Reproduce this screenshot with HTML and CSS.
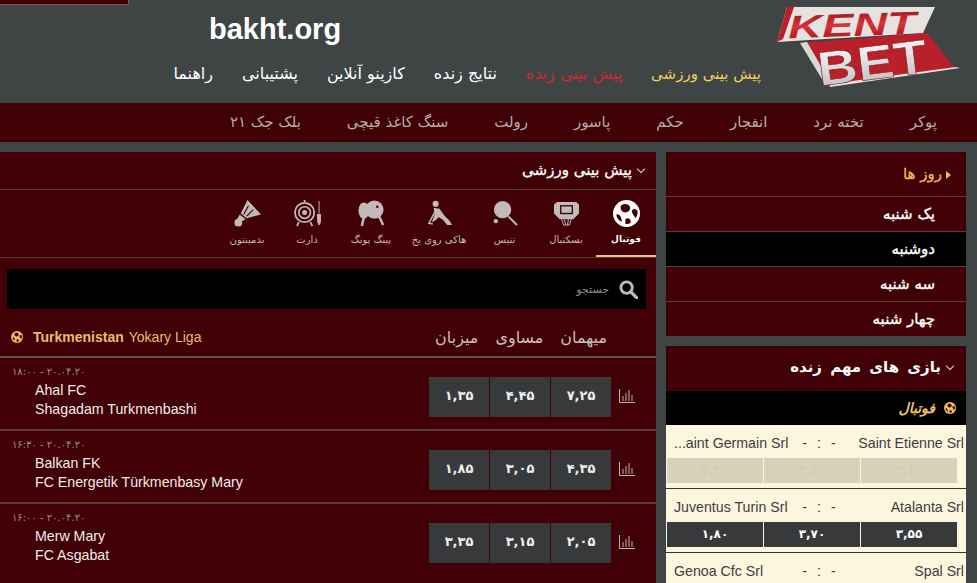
FILE: index.html
```html
<!DOCTYPE html>
<html lang="fa">
  <head>
    <meta charset="UTF-8" />
    <title>bakht.org</title>
    <link rel="stylesheet" href="styles.css">
  </head>
  <body>
    <div class="corner-box"></div>
    <header class="top">
      <div class="logo-wrap">
        <svg class="logo" viewBox="0 0 207 100" width="207" height="100">
          <defs>
            <linearGradient id="kent-red" x1="0" y1="0" x2="0" y2="1">
              <stop offset="0" stop-color="#8e0f18"/>
              <stop offset="0.5" stop-color="#d9323a"/>
              <stop offset="1" stop-color="#9c1019"/>
            </linearGradient>
            <linearGradient id="bet-white" x1="0" y1="0" x2="0" y2="1">
              <stop offset="0" stop-color="#ffffff"/>
              <stop offset="1" stop-color="#b9b9b9"/>
            </linearGradient>
          </defs>
          <polygon points="17,7 165,7 153,33 7,42" fill="#e6e2e0"/>
          <polygon points="17,7 24,7 13,39 7,42" fill="#b8202a"/>
          <text x="18" y="36" class="logo-kent" transform="rotate(-2 80 24)" textLength="128" lengthAdjust="spacingAndGlyphs">KENT</text>
          <polygon points="30,43 157,33 185,68 58,87" fill="#b8202a"/>
          <polygon points="30,43 37,42 62,85 55,84" fill="#d8d8d8"/>
          <polygon points="60,84 186,67 190,68 60,87" fill="#e6e2e0"/>
          <text x="47" y="79" class="logo-bet" transform="rotate(-7 105 60)" textLength="110" lengthAdjust="spacingAndGlyphs">BET</text>
        </svg>
      </div>
      <div class="top-main">
        <div class="site-name">bakht.org</div>
        <nav class="main-nav">
          <a class="yellow" href="#">پیش بینی ورزشی</a>
          <a class="red" href="#">پیش بینی زنده</a>
          <a href="#">نتایج زنده</a>
          <a href="#">کازینو آنلاین</a>
          <a href="#">پشتیبانی</a>
          <a href="#">راهنما</a>
        </nav>
      </div>
    </header>

    <nav class="games-nav">
      <a href="#">پوکر</a>
      <a href="#">تخته نرد</a>
      <a href="#">انفجار</a>
      <a href="#">حکم</a>
      <a href="#">پاسور</a>
      <a href="#">رولت</a>
      <a href="#">سنگ کاغذ قیچی</a>
      <a href="#">بلک جک ۲۱</a>
    </nav>

    <div class="content">
      <aside class="side">
        <section class="days">
          <h3 class="days-title"><span class="arrow-right"></span>روز ها</h3>
          <a class="day" href="#">یک شنبه</a>
          <a class="day active" href="#">دوشنبه</a>
          <a class="day" href="#">سه شنبه</a>
          <a class="day" href="#">چهار شنبه</a>
        </section>

        <section class="live">
          <h3 class="live-title"><span class="chev"></span>بازی های مهم زنده</h3>
          <div class="live-sport">
            <svg class="ball small" viewBox="0 0 24 24"><use href="#ball-icon"/></svg>
            <span>فوتبال</span>
          </div>
          <div class="live-list">
            <div class="live-match">
              <div class="live-teams">
                <span class="team-r">Saint Etienne Srl</span>
                <span class="score">- : -</span>
                <span class="team-l">...aint Germain Srl</span>
              </div>
              <div class="live-odds off"><span>۲,۱۰</span><span>۳,۲۰</span><span>۳,۳۰</span></div>
            </div>
            <div class="live-match">
              <div class="live-teams">
                <span class="team-r">Atalanta Srl</span>
                <span class="score">- : -</span>
                <span class="team-l">Juventus Turin Srl</span>
              </div>
              <div class="live-odds"><span>۳,۵۵</span><span>۳,۷۰</span><span>۱,۸۰</span></div>
            </div>
            <div class="live-match">
              <div class="live-teams">
                <span class="team-r">Spal Srl</span>
                <span class="score">- : -</span>
                <span class="team-l">Genoa Cfc Srl</span>
              </div>
            </div>
          </div>
        </section>
      </aside>

      <main class="panel">
        <h2 class="panel-title"><span class="chev"></span>پیش بینی ورزشی</h2>

        <div class="sports">
          <a class="sport active" href="#">
            <svg viewBox="0 0 24 24"><symbol id="ball-icon" viewBox="0 0 24 24"><circle cx="12" cy="12" r="12" fill="currentColor"/><path d="M7 5c2-2 7-2 8 1 1 2-1 5-4 5S6 8 7 5zM3 13c1-1 3 0 4 2l1 4c-2 0-5-3-5-6zM17 9c2-2 4-1 5 1 0 3-1 5-2 6-1-2-4-5-3-7zM11 17c1-1 3-1 4 0l1 3c-1 1-4 2-5 1z" fill="#400005"/></symbol><use href="#ball-icon"/></svg>
            <span>فوتبال</span>
          </a>
          <a class="sport" href="#">
            <svg viewBox="0 0 28 28"><path d="M4 2h20l3 3v9l-6 6H7l-6-6V5z" fill="currentColor"/><rect x="8" y="6" width="12" height="8" fill="none" stroke="#400005" stroke-width="1.400"/><path d="M9 20l2 6h6l2-6M12 20l1 6M16 20l-1 6" fill="none" stroke="currentColor"/></svg>
            <span>بسکتبال</span>
          </a>
          <a class="sport mid" href="#">
            <svg viewBox="0 0 28 28"><circle cx="12" cy="10" r="9" fill="currentColor"/><path d="M18 17l9 9" stroke="currentColor" stroke-width="2"/><circle cx="5" cy="22" r="2.200" fill="currentColor"/></svg>
            <span>تنیس</span>
          </a>
          <a class="sport wide" href="#">
            <svg viewBox="0 0 28 28"><circle cx="10" cy="4" r="3.200" fill="currentColor"/><path d="M8 8l6 1 5 7 5 5 3 5h-5l-5-6-4-2-3 3-4 2 3-8z" fill="currentColor"/><path d="M10 11L3 24l4 1" fill="none" stroke="currentColor" stroke-width="1.600"/></svg>
            <span>هاکی روی یخ</span>
          </a>
          <a class="sport wide" href="#">
            <svg viewBox="0 0 28 28"><circle cx="17" cy="10" r="9.500" fill="currentColor"/><ellipse cx="6" cy="11" rx="5.500" ry="8.500" fill="currentColor"/><path d="M6 18l-2 9M22 17l4 9" stroke="currentColor" stroke-width="2.600"/><circle cx="20" cy="7" r="1.300" fill="#400005"/></svg>
            <span>پینگ پونگ</span>
          </a>
          <a class="sport" href="#">
            <svg viewBox="0 0 28 28"><circle cx="11" cy="13" r="10" fill="none" stroke="currentColor" stroke-width="1.800"/><circle cx="11" cy="13" r="6" fill="none" stroke="currentColor" stroke-width="1.800"/><circle cx="11" cy="13" r="2.600" fill="currentColor"/><path d="M11 0v2M5 23l-2 4M17 23l2 4" stroke="currentColor" stroke-width="1.800"/><path d="M26 1v13M24.200 15h3.600l-.5 8-1.300 3-1.300-3z" fill="currentColor" stroke="currentColor"/></svg>
            <span>دارت</span>
          </a>
          <a class="sport" href="#">
            <svg viewBox="0 0 28 28"><path d="M14 0l14 15-15 4-6-5z" fill="currentColor"/><path d="M15 6l-5 9M20 10l-7 7" stroke="#400005" stroke-width="1.200"/><circle cx="4.500" cy="23.500" r="4" fill="currentColor"/><path d="M6 15l6 5-6 3-3-3z" fill="currentColor"/></svg>
            <span>بدمینتون</span>
          </a>
        </div>

        <div class="search">
          <svg viewBox="0 0 20 20"><circle cx="8" cy="8" r="6" fill="none" stroke="currentColor" stroke-width="3"/><path d="M12.500 12.500l6 6" stroke="currentColor" stroke-width="3.400" stroke-linecap="round"/></svg>
          <span>جستجو</span>
        </div>

        <div class="league">
          <div class="league-cols"><span>میهمان</span><span>مساوی</span><span>میزبان</span></div>
          <div class="league-name" dir="ltr">
            <svg class="ball small" viewBox="0 0 24 24"><use href="#ball-icon"/></svg>
            <b>Turkmenistan</b> Yokary Liga
          </div>
        </div>

        <div class="match">
          <svg class="stats" viewBox="0 0 16 14"><path d="M.5 0v13.500H16M4 12V7M7 12V4M10 12V1M13 12V6" fill="none" stroke="currentColor"/></svg>
          <div class="odds"><span>۷,۲۵</span><span>۴,۴۵</span><span>۱,۳۵</span></div>
          <div class="match-info" dir="ltr">
            <div class="match-date">۱۸:۰۰ - ۲۰.۰۴.۲۰</div>
            <div class="match-team">Ahal FC</div>
            <div class="match-team">Shagadam Turkmenbashi</div>
          </div>
        </div>
        <div class="match">
          <svg class="stats" viewBox="0 0 16 14"><path d="M.5 0v13.500H16M4 12V7M7 12V4M10 12V1M13 12V6" fill="none" stroke="currentColor"/></svg>
          <div class="odds"><span>۴,۳۵</span><span>۳,۰۵</span><span>۱,۸۵</span></div>
          <div class="match-info" dir="ltr">
            <div class="match-date">۱۶:۳۰ - ۲۰.۰۴.۲۰</div>
            <div class="match-team">Balkan FK</div>
            <div class="match-team">FC Energetik Türkmenbasy Mary</div>
          </div>
        </div>
        <div class="match">
          <svg class="stats" viewBox="0 0 16 14"><path d="M.5 0v13.500H16M4 12V7M7 12V4M10 12V1M13 12V6" fill="none" stroke="currentColor"/></svg>
          <div class="odds"><span>۲,۰۵</span><span>۳,۱۵</span><span>۳,۳۵</span></div>
          <div class="match-info" dir="ltr">
            <div class="match-date">۱۶:۰۰ - ۲۰.۰۴.۲۰</div>
            <div class="match-team">Merw Mary</div>
            <div class="match-team">FC Asgabat</div>
          </div>
        </div>
      </main>
    </div>
  </body>
</html>
```

FILE: styles.css
```css
html, body {
  height: 583px;
  overflow: hidden;
}
body {
  margin: 0;
  background-color: #3f4444;
  font-family: "DejaVu Sans", sans-serif;
  color: #fff;
  direction: rtl;
  position: relative;
}
a {
  color: inherit;
  text-decoration: none;
}
h2, h3 {
  margin: 0;
  font-weight: normal;
}
.corner-box {
  position: absolute;
  top: 0;
  left: 0;
  width: 129px;
  height: 5px;
  background-color: #400005;
  border: 1px solid #7a5a5e;
  border-top: 0;
  border-left: 0;
  box-sizing: border-box;
}

/* header */
.top {
  display: flex;
  height: 102px;
}
.logo-wrap {
  width: 207px;
  direction: ltr;
}
.logo {
  display: block;
  direction: ltr;
}
.logo-kent {
  font-family: "Liberation Sans", sans-serif;
  font-weight: bold;
  font-style: italic;
  font-size: 32px;
  fill: url(#kent-red);
}
.logo-bet {
  font-family: "Liberation Sans", sans-serif;
  font-weight: bold;
  font-size: 48px;
  fill: url(#bet-white);
  stroke: #8c1a20;
  stroke-width: 0.6px;
}
.top-main {
  flex: 1;
}
.site-name {
  direction: ltr;
  font-family: "Liberation Sans", sans-serif;
  font-size: 29px;
  font-weight: bold;
  line-height: 34px;
  padding: 12px 0 0 209px;
}
.main-nav {
  display: flex;
  align-items: center;
  gap: 29px;
  margin-top: 15px;
  padding-right: 9px;
  font-size: 16px;
  line-height: 26px;
}
.yellow {
  color: #f2cf5b;
  font-size: 15px;
}
.red { color: #d8262c; }

.games-nav {
  display: flex;
  gap: 46px;
  height: 39px;
  margin-top: 1px;
  padding-right: 40px;
  background-color: #400005;
  color: #b5adad;
  font-size: 15px;
  line-height: 38px;
}

/* page columns */
.content {
  display: flex;
  gap: 10px;
  margin-top: 10px;
  padding: 0 11px 0 0;
  align-items: flex-start;
}

/* right side */
.side {
  width: 300px;
  flex: none;
}
.days {
  background-color: #400005;
  margin-bottom: 10px;
}
.days-title {
  height: 45px;
  padding-right: 15px;
  font-size: 15px;
  -webkit-text-stroke: 0.3px #f5b74d;
  line-height: 44px;
  color: #f5b74d;
  border-bottom: 1px solid #5f3a3d;
  box-sizing: border-box;
}
.arrow-right {
  display: inline-block;
  border: 4px solid transparent;
  border-left: 5px solid #f5b74d;
  border-right: 0;
  margin-left: 4px;
}
.day {
  display: block;
  height: 35px;
  padding-right: 31px;
  font-size: 15px;
  -webkit-text-stroke: 0.4px #fff;
  line-height: 34px;
  border-bottom: 1px solid #5f3a3d;
  box-sizing: border-box;
}
.day:last-child {
  border-bottom: 0;
  height: 34px;
}
.day.active {
  background-color: #000;
}
.live {
  background-color: #400005;
}
.live-title {
  height: 45px;
  padding-right: 11px;
  font-size: 15px;
  font-weight: bold;
  word-spacing: 3px;
  line-height: 43px;
}
.chev {
  display: inline-block;
  width: 5px;
  height: 5px;
  margin: 0 2px 3px 6px;
  border-right: 1.500px solid #ddd;
  border-bottom: 1.500px solid #ddd;
  transform: rotate(45deg);
}
.live-sport {
  display: flex;
  align-items: center;
  gap: 9px;
  height: 34px;
  padding-right: 10px;
  background-color: #000;
  color: #eec25f;
  font-size: 14px;
  font-style: italic;
  font-weight: bold;
}
.ball.small {
  width: 12px;
  height: 12px;
}
.live-list {
  background-color: #fdf6df;
  color: #3d3d3d;
  font-family: "Liberation Sans", sans-serif;
  font-size: 14.200px;
}
.live-match {
  border-bottom: 1px solid #333;
  padding-bottom: 5px;
}
.live-teams {
  display: flex;
  justify-content: space-between;
  height: 33px;
  line-height: 37px;
  padding: 0 2px 0 8px;
}
.live-teams span {
  white-space: nowrap;
}
.team-r, .team-l {
  width: 115px;
}
.team-l {
  direction: ltr;
  text-align: left;
}
.team-r {
  direction: ltr;
  text-align: right;
}
.score {
  word-spacing: 6px;
  direction: ltr;
}
.live-odds {
  display: flex;
  gap: 1px;
  height: 25px;
  margin: 0 9px 0 1px;
}
.live-odds span {
  flex: 1;
  background-color: #37393b;
  color: #fff;
  font-family: "DejaVu Sans", sans-serif;
  font-size: 12px;
  font-weight: bold;
  text-align: center;
  line-height: 24px;
}
.live-odds.off span {
  background-color: #d8d2bc;
  color: #d2ccb6;
}

/* main panel */
.panel {
  flex: 1;
  height: 431px;
  background-color: #400005;
}
.panel-title {
  height: 38px;
  padding-right: 10px;
  font-size: 15px;
  -webkit-text-stroke: 0.3px #fff;
  line-height: 37px;
  border-bottom: 1px solid #5f3a3d;
  box-sizing: border-box;
}
.sports {
  display: flex;
  height: 68px;
  border-bottom: 1px solid #5f3a3d;
  box-sizing: border-box;
}
.sport {
  display: flex;
  flex-direction: column;
  align-items: center;
  flex: none;
  width: 60px;
  height: 67px;
  padding-top: 10px;
  box-sizing: border-box;
  color: #c2baba;
  font-size: 10px;
  white-space: nowrap;
}
.sport.mid {
  width: 63px;
}
.sport.wide {
  width: 68px;
}
.sport svg {
  width: 27px;
  height: 27px;
  margin-bottom: 7px;
}
.sport.active {
  color: #fff;
  font-size: 9px;
  font-weight: bold;
  border-bottom: 2px solid #f7bd6a;
}
.search {
  display: flex;
  align-items: center;
  gap: 10px;
  height: 40px;
  margin: 11px 10px 0 7px;
  padding-right: 8px;
  background-color: #000;
  color: #8d8d8d;
  font-size: 11px;
}
.search svg {
  width: 19px;
  height: 19px;
  color: #bbb;
}
.league {
  display: flex;
  justify-content: space-between;
  align-items: center;
  height: 38px;
  margin-top: 9px;
  border-bottom: 2px solid #5f5256;
}
.league-cols {
  display: flex;
  gap: 17px;
  padding-right: 49px;
  color: #c7bfbf;
  font-size: 16px;
}
.league-name {
  display: flex;
  align-items: center;
  gap: 5px;
  padding-left: 11px;
  color: #e8bd6b;
  font-family: "Liberation Sans", sans-serif;
  font-size: 14px;
}
.league-name b {
  margin-left: 5px;
}
.match {
  display: flex;
  align-items: flex-start;
  height: 71px;
  padding-right: 21px;
  border-bottom: 2px solid #5f3a3d;
  color: #bdb5b5;
}
.match:last-child {
  border-bottom: 0;
}
.stats {
  width: 16px;
  height: 14px;
  margin: 31px 0 0 8px;
  flex: none;
}
.odds {
  display: flex;
  gap: 1px;
  flex: none;
  margin-top: 19px;
}
.odds span {
  width: 60px;
  height: 40px;
  background-color: #37393b;
  color: #eee;
  font-size: 13px;
  font-weight: bold;
  line-height: 38px;
  text-align: center;
}
.match-info {
  flex: 1;
  margin-top: 8px;
  padding-left: 12px;
  font-family: "Liberation Sans", sans-serif;
}
.match-date {
  margin-bottom: 3px;
  font-family: "DejaVu Sans", sans-serif;
  font-size: 10px;
  line-height: 12px;
  color: #9a8f8f;
}
.match-team {
  padding-left: 23px;
  color: #f0ecec;
  font-size: 14.200px;
  line-height: 19px;
}
```
